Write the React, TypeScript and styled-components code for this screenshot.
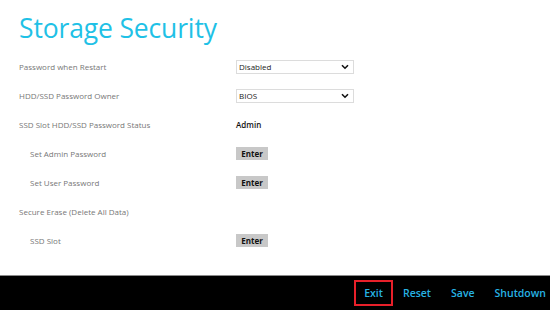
import styled, { createGlobalStyle } from "styled-components";

const GlobalStyle = createGlobalStyle`
  html, body {
    margin: 0;
    padding: 0;
    background: #ffffff;
  }
  body {
    font-family: "Open Sans", "Noto Sans", sans-serif;
  }
`;

const Screen = styled.div`
  width: 550px;
  height: 310px;
  display: flex;
  flex-direction: column;
  overflow: hidden;
  background: #ffffff;
`;

const Content = styled.div`
  flex: 1;
  padding: 9px 0 0 19px;
`;

const Title = styled.h1`
  margin: 0 0 5px 0;
  font-size: 26.5px;
  font-weight: 400;
  color: #1fc1e6;
  line-height: 38px;
  letter-spacing: -0.15px;
`;

const Rows = styled.div`
  display: flex;
  flex-direction: column;
`;

const Row = styled.div`
  display: grid;
  grid-template-columns: 217px 1fr;
  align-items: center;
  height: 29px;
`;

const Label = styled.div<{ $indent?: boolean }>`
  font-size: 8px;
  color: #777777;
  padding-left: ${(p) => (p.$indent ? "11px" : "0")};
`;

const Select = styled.div`
  width: 118px;
  height: 14px;
  box-sizing: border-box;
  border: 1px solid #dcdcdc;
  display: flex;
  align-items: center;
  justify-content: space-between;
  padding: 0 4px 0 2px;
  font-size: 8px;
  color: #222;
`;

const Value = styled.div`
  font-size: 8px;
  font-weight: 600;
  color: #111;
`;

const EnterButton = styled.div`
  width: 32px;
  height: 13px;
  background: #c8c8c8;
  display: flex;
  align-items: center;
  justify-content: center;
  font-size: 8px;
  font-weight: 700;
  color: #111;
`;

const Footer = styled.div`
  height: 35px;
  box-sizing: border-box;
  background: #000;
  border-top: 1px solid #8a8a8a;
  display: flex;
  justify-content: flex-end;
  align-items: center;
`;

const FooterButton = styled.div<{ $selected?: boolean }>`
  font-size: 10.5px;
  font-weight: 600;
  color: #27b3e4;
  padding: 0 8px;
  height: 26px;
  box-sizing: border-box;
  display: flex;
  align-items: center;
  border: 2.5px solid ${(p) => (p.$selected ? "#e8202a" : "transparent")};

  &:last-child {
    padding-right: 2px;
  }
`;

const Chevron = () => (
  <svg width="8" height="6" viewBox="0 0 8 6">
    <path d="M1 1.2 L4 4.2 L7 1.2" fill="none" stroke="#111" strokeWidth="1.6" />
  </svg>
);

export default function App() {
  return (
    <Screen>
      <GlobalStyle />
      <Content>
        <Title>Storage Security</Title>
        <Rows>
          <Row>
            <Label>Password when Restart</Label>
            <Select>
              Disabled
              <Chevron />
            </Select>
          </Row>
          <Row>
            <Label>HDD/SSD Password Owner</Label>
            <Select>
              BIOS
              <Chevron />
            </Select>
          </Row>
          <Row>
            <Label>SSD Slot HDD/SSD Password Status</Label>
            <Value>Admin</Value>
          </Row>
          <Row>
            <Label $indent>Set Admin Password</Label>
            <EnterButton>Enter</EnterButton>
          </Row>
          <Row>
            <Label $indent>Set User Password</Label>
            <EnterButton>Enter</EnterButton>
          </Row>
          <Row>
            <Label>Secure Erase (Delete All Data)</Label>
            <div />
          </Row>
          <Row>
            <Label $indent>SSD Slot</Label>
            <EnterButton>Enter</EnterButton>
          </Row>
        </Rows>
      </Content>
      <Footer>
        <FooterButton $selected>Exit</FooterButton>
        <FooterButton>Reset</FooterButton>
        <FooterButton>Save</FooterButton>
        <FooterButton>Shutdown</FooterButton>
      </Footer>
    </Screen>
  );
}
